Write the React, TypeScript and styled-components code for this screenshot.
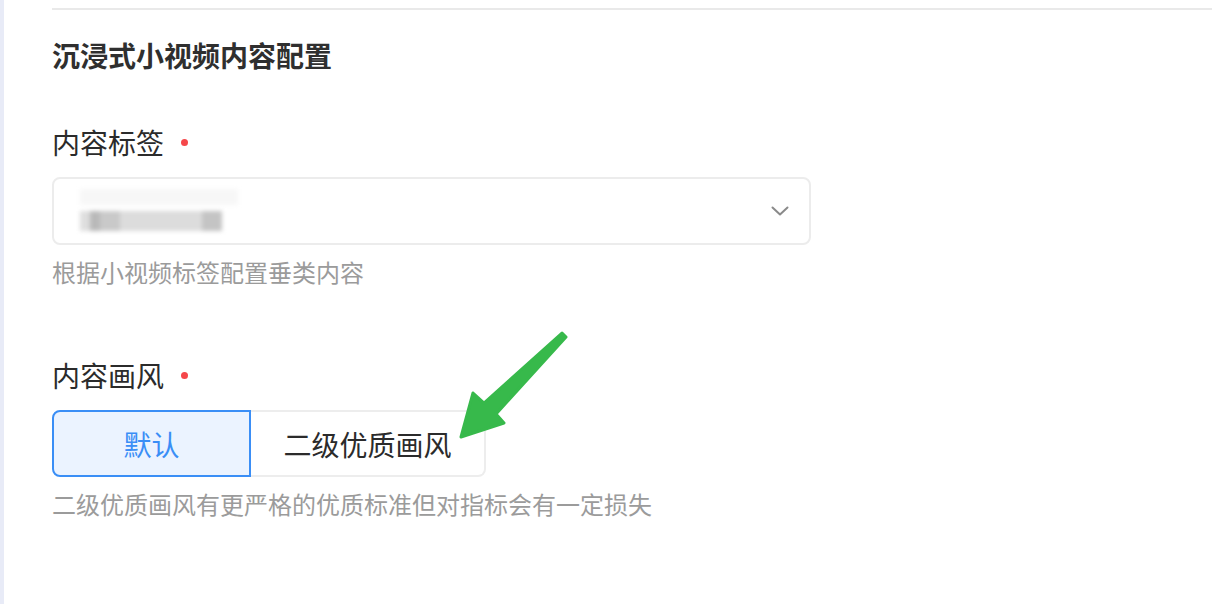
import styled, { createGlobalStyle } from "styled-components";

const GlobalStyle = createGlobalStyle`
  html, body {
    margin: 0;
    padding: 0;
    background: #ffffff;
  }
  body {
    font-family: "Noto Sans CJK SC", "Noto Sans", sans-serif;
  }
`;

const Page = styled.div`
  position: relative;
  width: 1212px;
  height: 604px;
  display: flex;
  overflow: hidden;
`;

const SideStrip = styled.div`
  width: 4px;
  flex-shrink: 0;
  background: #e8ebf7;
`;

const Content = styled.div`
  flex: 1;
  padding: 8px 0 0 48px;
  display: flex;
  flex-direction: column;
`;

const Divider = styled.div`
  height: 2px;
  background: #e9e9e9;
`;

const Title = styled.h2`
  margin: 25px 0 0;
  font-size: 28px;
  line-height: 40px;
  font-weight: 700;
  color: #2f2f2f;
`;

const FormItem = styled.div<{ $gap: number }>`
  margin-top: ${(p) => p.$gap}px;
  display: flex;
  flex-direction: column;
`;

const Label = styled.div`
  display: flex;
  align-items: center;
  font-size: 28px;
  line-height: 40px;
  color: #2b2b2b;
  margin-bottom: 15px;
`;

const Required = styled.span`
  width: 7px;
  height: 7px;
  border-radius: 50%;
  background: #f5474a;
  margin-left: 17px;
`;

const SelectBox = styled.div`
  box-sizing: border-box;
  width: 759px;
  height: 68px;
  border: 2px solid #ececec;
  border-radius: 8px;
  display: flex;
  align-items: center;
  justify-content: space-between;
  padding: 0 20px 0 26px;
`;

const BlurredValue = styled.div`
  position: relative;
  width: 160px;
  height: 44px;
  filter: blur(2px);
`;

const BlurTop = styled.div`
  height: 16px;
  width: 158px;
  background: #f7f7f7;
`;

const BlurRow = styled.div`
  display: flex;
  margin-top: 6px;
  height: 20px;
`;

const BlurCell = styled.div<{ $w: number; $c: string }>`
  width: ${(p) => p.$w}px;
  background: ${(p) => p.$c};
`;

const Chevron = styled.svg`
  width: 18px;
  height: 10px;
`;

const Help = styled.div`
  margin-top: 10px;
  font-size: 24px;
  line-height: 34px;
  color: #9b9b9b;
`;

const Segmented = styled.div`
  display: flex;
`;

const SegmentButton = styled.div<{ $active?: boolean; $width: number }>`
  box-sizing: border-box;
  width: ${(p) => p.$width}px;
  height: 67px;
  display: flex;
  align-items: center;
  justify-content: center;
  font-size: 28px;
  color: ${(p) => (p.$active ? "#3a8ef6" : "#2b2b2b")};
  background: ${(p) => (p.$active ? "#ebf3ff" : "#ffffff")};
  border: 2px solid ${(p) => (p.$active ? "#3a8ef6" : "#ededed")};
  border-left-width: ${(p) => (p.$active ? 2 : 0)}px;
  border-radius: ${(p) => (p.$active ? "8px 0 0 8px" : "0 8px 8px 0")};
`;

const ArrowLayer = styled.svg`
  position: absolute;
  left: 0;
  top: 0;
  pointer-events: none;
`;

const App = () => {
  return (
    <Page>
      <GlobalStyle />
      <SideStrip />
      <Content>
        <Divider />
        <Title>沉浸式小视频内容配置</Title>

        <FormItem $gap={47}>
          <Label>
            内容标签
            <Required />
          </Label>
          <SelectBox>
            <BlurredValue>
              <BlurTop />
              <BlurRow>
                <BlurCell $w={10} $c="#dedede" />
                <BlurCell $w={10} $c="#b9b9b9" />
                <BlurCell $w={20} $c="#c9c9c9" />
                <BlurCell $w={82} $c="#dcdcdc" />
                <BlurCell $w={20} $c="#c4c4c4" />
              </BlurRow>
            </BlurredValue>
            <Chevron viewBox="0 0 18 10" fill="none">
              <path
                d="M1.5 1.5 L9 8.5 L16.5 1.5"
                stroke="#8a8a8a"
                strokeWidth="2"
                strokeLinecap="round"
                strokeLinejoin="round"
              />
            </Chevron>
          </SelectBox>
          <Help>根据小视频标签配置垂类内容</Help>
        </FormItem>

        <FormItem $gap={66}>
          <Label>
            内容画风
            <Required />
          </Label>
          <Segmented>
            <SegmentButton $active $width={199}>
              默认
            </SegmentButton>
            <SegmentButton $width={235}>二级优质画风</SegmentButton>
          </Segmented>
          <Help>二级优质画风有更严格的优质标准但对指标会有一定损失</Help>
        </FormItem>
      </Content>

      <ArrowLayer width="1212" height="604" viewBox="0 0 1212 604">
        <polygon
          points="461,437 473,393 484,403 562,333 566,337 496,414 504,423"
          fill="#37b94b"
          stroke="#37b94b"
          strokeWidth="3"
          strokeLinejoin="round"
        />
      </ArrowLayer>
    </Page>
  );
};

export default App;
